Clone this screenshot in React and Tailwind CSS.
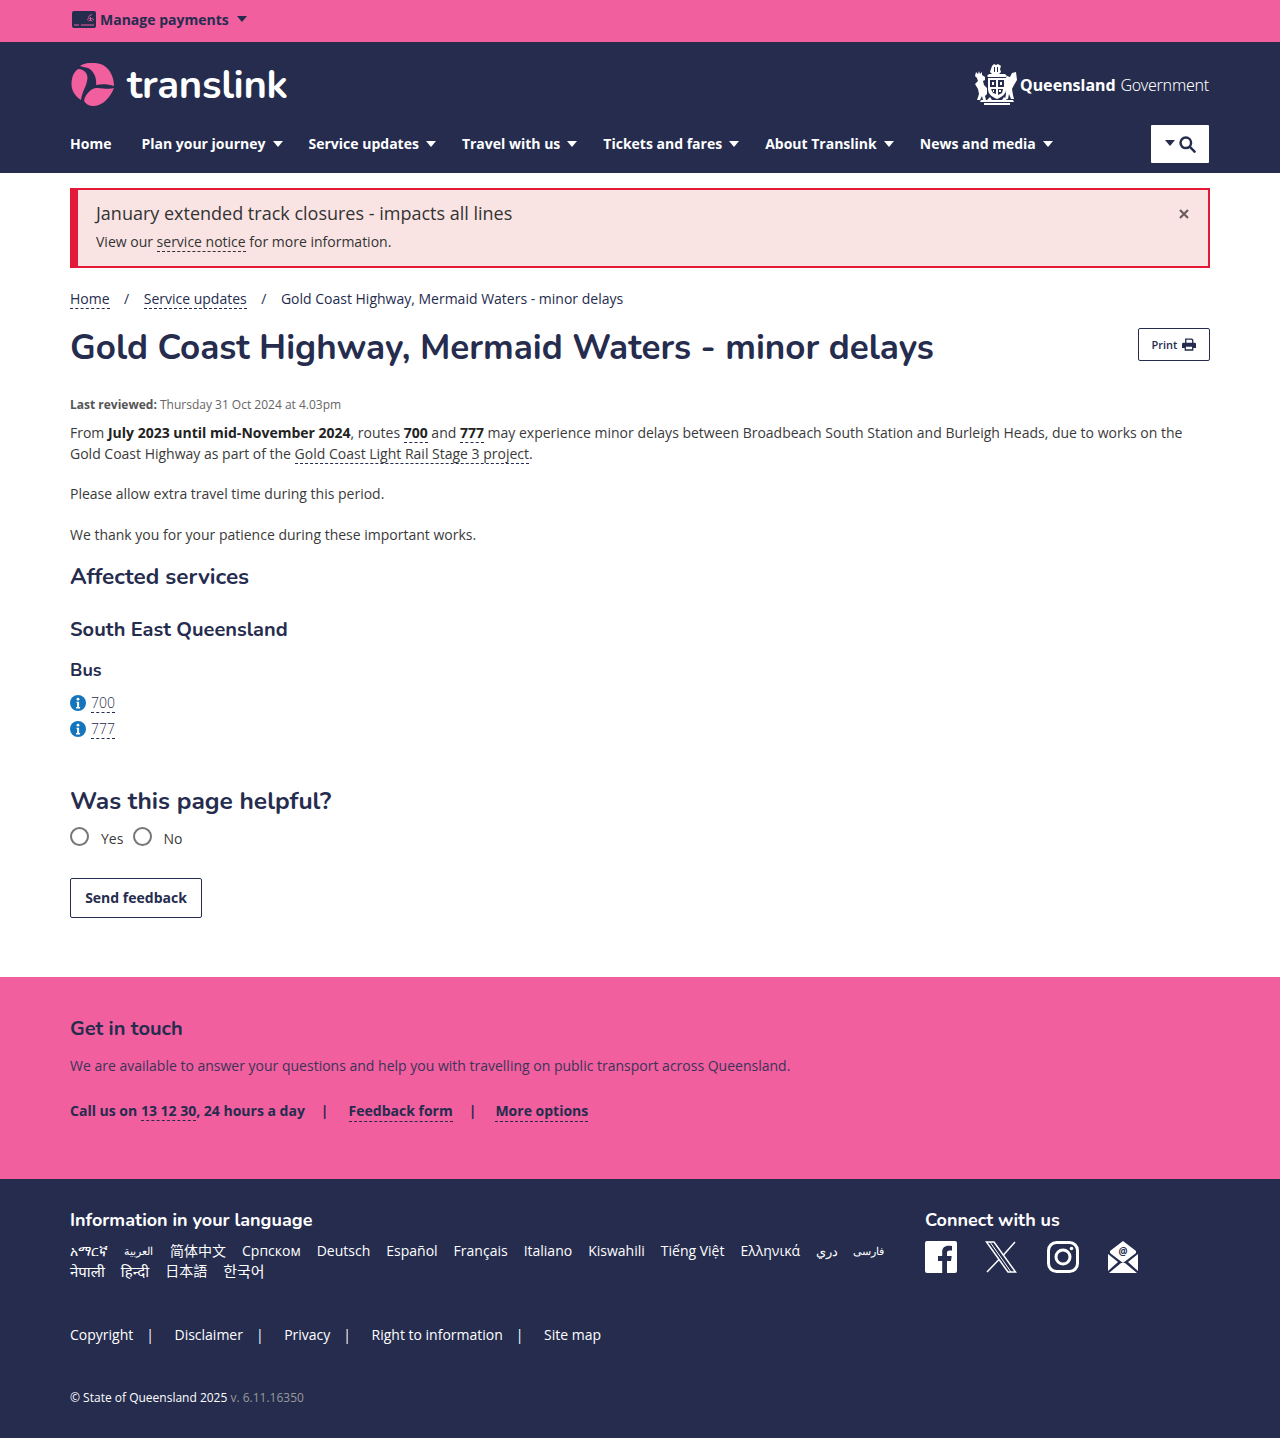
import React from "react";

const L = ({ children, className = "" }) => (
  <a className={`border-b border-dashed border-[#252c4e] ${className}`}>{children}</a>
);
const Caret = ({ className = "" }) => (
  <svg viewBox="0 0 10 6" className={`w-[10px] h-[6px] ${className}`}><path d="M0 0h10L5 6z" fill="currentColor" /></svg>
);
const Info = () => (
  <svg viewBox="0 0 16 16" className="w-4 h-4 shrink-0"><circle cx="8" cy="8" r="8" fill="#1475bc" /><circle cx="8" cy="4.2" r="1.4" fill="#fff" /><path d="M6.500 6.800h2.600v5.300h1v1.300H6v-1.300h1.100V8.100h-.6z" fill="#fff" /></svg>
);
const Radio = () => <span className="w-[19px] h-[19px] rounded-full border-2 border-[#767676] bg-white block" />;

const navItems = ["Plan your journey", "Service updates", "Travel with us", "Tickets and fares", "About Translink", "News and media"];
const langs = [
  { t: "አማርኛ" }, { t: "العربية", c: "text-[11px] mr-[1px]" }, { t: "简体中文" }, { t: "Српском" }, { t: "Deutsch" }, { t: "Español" }, { t: "Français" }, { t: "Italiano" }, { t: "Kiswahili" }, { t: "Tiếng Việt" }, { t: "Ελληνικά" }, { t: "دري", c: "text-[13px] mr-[-1px]" }, { t: "فارسی", c: "text-[11px]" }, { t: "नेपाली", c: "text-[15px]" }, { t: "हिन्दी", c: "text-[15px]" }, { t: "日本語" }, { t: "한국어", c: "text-[15px]" },
];
const legal = ["Copyright", "Disclaimer", "Privacy", "Right to information"];

const Crest = () => (
  <svg viewBox="3 4 44 42" className="w-[44px] h-[42px]" fill="#fff">
    <path d="M22 6l2-2 2 1 2-1 3 2-1 3 1 3-2 2h-7l-2-2 1-3z" />
    <path d="M19 14h16l2 2-1 1H18l-1-1z" />
    <path d="M24 7h1v5h-1zM27 7h1v5h-1z" fill="#252c4e" />
    <path d="M18 18h18v11c0 5-4 8-9 10-5-2-9-5-9-10z" />
    <path d="M20 20h6v7h-6zM28 20h6v7h-6zM21 29h5v5l-3-1zM28 29h5l-1 4-4 2z" fill="#252c4e" />
    <path d="M22 22h2v3h-2zM30 22h2v3h-2zM23 30h1v2h-1zM29 30h2v2h-2z" />
    <path d="M6 12l2 2 1-3 1 3 2-2 0 3 3 2v3l-2 1 1 4 3 3v6l-2 2 1 4h-3l-1-4-2 4H7l2-6-1-5-3-5 3-3-1-3-2-2z" />
    <path d="M46 12l1 8-3 5-2 4 1 6 1 4h-3l-2-5-1 5h-3l1-5-1-6 1-5-1-4 2-3 3 1 2-4z" />
    <path d="M11 40h32l1 2H10z" />
    <path d="M14 43h26v2H14z" />
    <path d="M17 40l3-3 2 3zM37 40l-3-3-2 3z" />
  </svg>
);

const Logo = () => (
  <svg viewBox="5 5 44 44" className="w-[44px] h-[44px]" fill="#f15f9f">
    <path d="M14 8C20 4 30 4 37 7 44 11 48 19 48 28 42 26 35 26 30 27 31 20 28 13 22 10 19 9 16 9 14 8z" />
    <path d="M12 11C19 11 23 17 21 23 20 29 16 34 15 42 9 38 5 32 5.500 25 6 18 8 14 12 11z" />
    <path d="M48 30C45 38 37 48 28 48 23 48 20 46 18 43 19 37 24 31 30 30 36 29.500 42 32 48 30z" />
  </svg>
);

const h = "font-['Nunito','Lato',sans-serif] font-bold";

export default function App() {
  return (
    <div className="font-['Open_Sans',sans-serif] text-[14px] leading-[21px] text-[#3a3a3a] bg-white">
      <div className="bg-[#f15f9f] h-[42px]">
        <div className="w-[1140px] mx-auto flex items-center h-[39px] text-[#252c4e] font-bold">
          <svg viewBox="0 0 24 17" className="w-6 h-[17px] ml-[2px] mr-[4px]">
            <rect width="24" height="17" rx="2" fill="#252c4e" />
            <path d="M2 14h5M9 14h13" stroke="#f15f9f" strokeWidth="1" />
            <path d="M15 9a4.500 4.500 0 0 1 7 0M16.500 10a3 3 0 0 1 4 0M16 7a5 5 0 0 1 4-3.500M18.500 10V6" stroke="#f15f9f" strokeWidth="0.8" fill="none" />
          </svg>
          <span>Manage payments</span>
          <Caret className="ml-2 mt-[-2px]" />
        </div>
      </div>

      <header className="bg-[#252c4e] h-[131px] text-white">
        <div className="w-[1140px] mx-auto">
          <div className="flex justify-between items-start h-[83px]">
            <div className="flex items-center mt-[21px] ml-[1px]">
              <Logo />
              <span className={`${h} text-[40px] leading-[44px] ml-[12px] tracking-[-0.3px]`}>translink</span>
            </div>
            <div className="flex items-center mt-[22px] mr-[1px]">
              <Crest />
              <span className="ml-[3px] font-['Noto_Sans',sans-serif] text-[16px] font-bold">Queensland</span>
              <span className="ml-[5px] font-['Noto_Sans',sans-serif] text-[16px] font-light tracking-[-0.25px]">Government</span>
            </div>
          </div>
          <nav className="flex items-center justify-between h-[38px]">
            <div className="flex items-center font-bold pb-[2px]">
              <span className="mr-[30px]">Home</span>
              {navItems.map((n) => (
                <span key={n} className="flex items-center mr-[26px]">
                  {n}
                  <Caret className="ml-[7px] mt-[1px]" />
                </span>
              ))}
            </div>
            <div className="w-[58px] h-[38px] bg-white rounded-[1px] mr-[1px] flex items-center justify-center text-[#252c4e]">
              <Caret className="mr-[4px] mb-[2px]" />
              <svg viewBox="0 0 18 18" className="w-[17px] h-[17px]" fill="none" stroke="currentColor" strokeWidth="2.6"><circle cx="7.200" cy="7.200" r="5.600" /><path d="M11.500 11.500L16.500 16.500" strokeLinecap="round" /></svg>
            </div>
          </nav>
        </div>
      </header>

      <main className="w-[1140px] mx-auto pt-[15px] text-[#3a3a3a]">
        <div className="h-[80px] bg-[#f9e3e3] border-2 border-l-[8px] border-[#e31937] pl-[18px] pr-[19px] pt-[11px] flex justify-between">
          <div>
            <div className="text-[18px] leading-[24px] text-[#333]">January extended track closures - impacts all lines</div>
            <div className="mt-[6px] text-[#333]">View our <a className="border-b border-dashed border-[#333]">service notice</a> for more information.</div>
          </div>
          <svg viewBox="0 0 10 10" className="w-[10px] h-[10px] mt-[8px] text-[#6b5b5b]" stroke="currentColor" strokeWidth="2.2"><path d="M1 1l8 8M9 1l-8 8" /></svg>
        </div>

        <div className="flex mt-[21px] text-[#252c4e] leading-[19px]">
          <L>Home</L><span className="mx-[14.500px]">/</span><L>Service updates</L><span className="mx-[14.500px]">/</span><span>Gold Coast Highway, Mermaid Waters - minor delays</span>
        </div>

        <div className="flex justify-between items-start mt-[9px]">
          <h1 className={`${h} text-[35px] leading-[60px] text-[#252c4e]`}>Gold Coast Highway, Mermaid Waters - minor delays</h1>
          <div className="mt-[10px] w-[72px] h-[33px] border border-[#252c4e] rounded-[2px] flex items-center justify-center text-[11px] font-semibold text-[#252c4e]">
            Print
            <svg viewBox="0 0 16 14" className="w-[14px] h-[13px] ml-[5px]" fill="currentColor"><path d="M3.500 0h8L13 1.500V5h1.500A1.500 1.500 0 0 1 16 6.500V11h-3v3H3v-3H0V6.500A1.500 1.500 0 0 1 1.500 5H3.500zM5 1.500V5h6.500V2.500l-1-1zM4.500 9.500v3h7v-3z" fillRule="evenodd" /></svg>
          </div>
        </div>

        <div className="mt-[18px] text-[12px] leading-[18px] text-[#666]"><b className="font-bold text-[#555]">Last reviewed:</b> Thursday 31 Oct 2024 at 4.03pm</div>
        <p className="mt-[8px]">From <b className="text-[#222]">July 2023 until mid-November 2024</b>, routes <L className="font-bold text-[#222]">700</L> and <L className="font-bold text-[#222]">777</L> may experience minor delays between Broadbeach South Station and Burleigh Heads, due to works on the Gold Coast Highway as part of the <L>Gold Coast Light Rail Stage 3 project</L>.</p>
        <p className="mt-[19px]">Please allow extra travel time during this period.</p>
        <p className="mt-[20px]">We thank you for your patience during these important works.</p>

        <h2 className={`${h} text-[22.500px] leading-[28px] text-[#252c4e] mt-[18px]`}>Affected services</h2>
        <h3 className={`${h} text-[20px] leading-[26px] text-[#252c4e] mt-[26px]`}>South East Queensland</h3>
        <h4 className={`${h} text-[18px] leading-[24px] text-[#252c4e] mt-[15px]`}>Bus</h4>
        <div className="mt-[8px] flex items-center gap-[5px] h-[26px]"><Info /><L className="text-[#252c4e] leading-[18px] font-light">700</L></div>
        <div className="flex items-center gap-[5px] h-[26px]"><Info /><L className="text-[#252c4e] leading-[18px] font-light">777</L></div>

        <h2 className={`${h} text-[24.500px] leading-[32px] text-[#252c4e] mt-[43px]`}>Was this page helpful?</h2>
        <div className="flex items-center mt-[7px] h-[24px]">
          <Radio /><span className="ml-[12px] mt-[4px]">Yes</span>
          <span className="ml-[10px]"><Radio /></span><span className="ml-[11px] mt-[4px]">No</span>
        </div>
        <div className="mt-[30px] w-[132px] h-[40px] border border-[#252c4e] rounded-[2px] flex items-center justify-center pb-[2px] font-bold text-[#252c4e]">Send feedback</div>
      </main>

      <section className="bg-[#f15f9f] h-[202px] mt-[59px] text-[#252c4e]">
        <div className="w-[1140px] mx-auto pt-[39px]">
          <h2 className={`${h} text-[20px] leading-[26px]`}>Get in touch</h2>
          <p className="mt-[13px] text-[#3b3358]">We are available to answer your questions and help you with travelling on public transport across Queensland.</p>
          <div className="flex mt-[24px] font-bold">
            <span>Call us on <L>13 12 30</L>, 24 hours a day</span>
            <span className="ml-[16px] mr-[20px]">|</span>
            <L>Feedback form</L>
            <span className="ml-[16px] mr-[19px]">|</span>
            <L>More options</L>
          </div>
        </div>
      </section>

      <footer className="bg-[#252c4e] h-[259px] text-white">
        <div className="w-[1140px] mx-auto pt-[28px]">
          <div className="flex justify-between">
            <div className="w-[830px]">
              <h2 className={`${h} text-[18px] leading-[26px]`}>Information in your language</h2>
              <div className="flex flex-wrap items-center gap-x-[16px] mt-[8px] leading-[20px] font-['Open_Sans','Noto_Sans','Noto_Sans_CJK_SC',sans-serif]">
                {langs.map((l) => <a key={l.t} className={l.c || ""}>{l.t}</a>)}
              </div>
            </div>
            <div className="w-[285px]">
              <h2 className={`${h} text-[18px] leading-[26px]`}>Connect with us</h2>
              <div className="flex items-center mt-[8px] gap-[28px]">
                <svg viewBox="0 0 32 32" className="w-[32px] h-[32px]"><path fill="#fff" d="M2 0h28a2 2 0 0 1 2 2v28a2 2 0 0 1-2 2h-8V20h4l.7-5H22v-3c0-1.500.5-2.500 2.500-2.500H27V5c-.5 0-2-.2-3.700-.2-3.600 0-6.100 2.200-6.100 6.300V15H13v5h4.200v12H2a2 2 0 0 1-2-2V2a2 2 0 0 1 2-2z" /></svg>
                <svg viewBox="0 0 32 32" className="w-[32px] h-[32px]" fill="none" stroke="#fff" strokeWidth="1.500"><path d="M1.500 1h7.500l21.500 30h-7.500z" /><path d="M5 1l21 30" strokeWidth="1" /><path d="M30 1L18 14.500M14 18.500L2 31" /></svg>
                <svg viewBox="0 0 32 32" className="w-[32px] h-[32px] ml-[2px]" fill="none" stroke="#fff" strokeWidth="3"><rect x="1.500" y="1.500" width="29" height="29" rx="8" /><circle cx="16" cy="16" r="7" /><circle cx="24.500" cy="7.500" r="1.800" fill="#fff" stroke="none" /></svg>
                <svg viewBox="0 0 30 32" className="w-[30px] h-[32px] ml-[1px]"><path fill="#fff" d="M15 0L28 10v2L15 22 2 12v-2zM0 13l10 8-10 9zM30 13v17l-10-9zM1 32l12-10h4l12 10z" /><text x="15" y="13.500" fontSize="10" fontWeight="700" textAnchor="middle" fill="#252c4e" fontFamily="Noto Sans">@</text></svg>
              </div>
            </div>
          </div>
          <div className="flex items-center mt-[43px]">
            {legal.map((l) => (
              <span key={l} className="flex items-center"><a>{l}</a><span className="ml-[13px] mr-[20.500px]">|</span></span>
            ))}
            <a>Site map</a>
          </div>
          <div className="mt-[44px] text-[12px] leading-[18px]">© State of Queensland 2025 <span className="text-[#9a9a9a]">v. 6.11.16350</span></div>
        </div>
      </footer>
    </div>
  );
}
